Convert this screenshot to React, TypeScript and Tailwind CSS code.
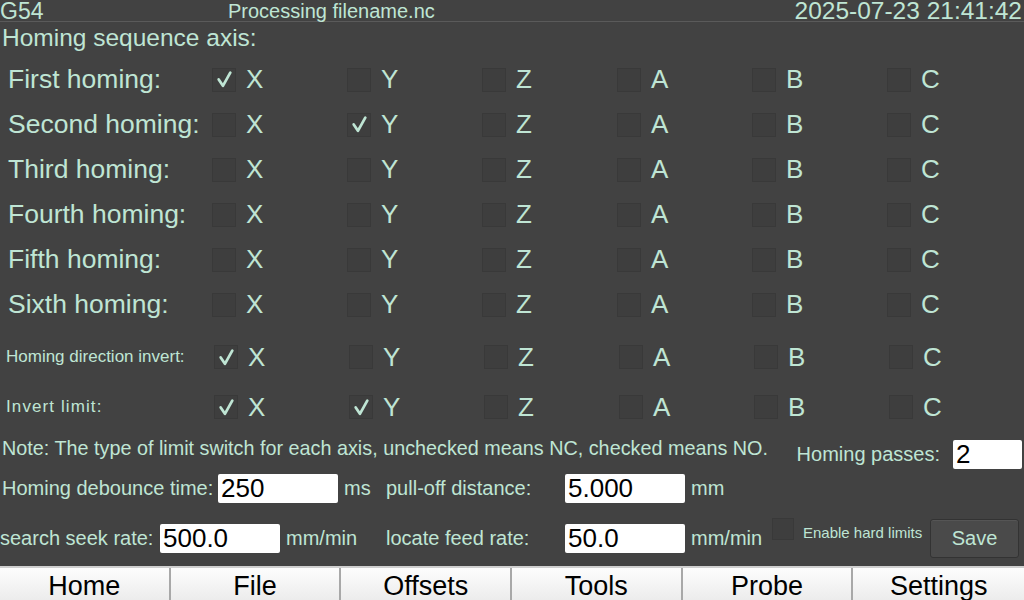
import React from "react";

const AXES = ["X", "Y", "Z", "A", "B", "C"];

function Box({ checked, size = 24 }: { checked?: boolean; size?: number }) {
  return (
    <div
      className="flex items-center justify-center border border-[#393939] bg-[#3e3e3e] shrink-0"
      style={{ width: size, height: size }}
    >
      {checked && (
        <svg width="19" height="19" viewBox="0 0 18 18" fill="none">
          <path d="M3.5 9 L7.5 15 L14.5 2.5" stroke="#bfe5d4" strokeWidth="2.6" strokeLinecap="round" strokeLinejoin="round" />
        </svg>
      )}
    </div>
  );
}

function HomingRow({ label, checked }: { label: string; checked: number }) {
  return (
    <div className="flex items-center h-[45px]">
      <div className="w-[212px] pl-[8px] text-[26.5px] whitespace-nowrap">{label}</div>
      {AXES.map((a, i) => (
        <div key={a} className="w-[135px] flex items-center gap-[10px]">
          <Box checked={i === checked} />
          <span className="text-[26px]">{a}</span>
        </div>
      ))}
    </div>
  );
}

function SmallRow({ label, checked, wide }: { label: string; checked: number[]; wide?: boolean }) {
  return (
    <div className="flex items-center h-[50px]">
      <div
        className={
          "w-[214px] pl-[6px] text-[17px] whitespace-nowrap " + (wide ? "tracking-[1.1px]" : "")
        }
      >
        {label}
      </div>
      {AXES.map((a, i) => (
        <div key={a} className="w-[135px] flex items-center gap-[10px]">
          <Box checked={checked.includes(i)} />
          <span className="text-[26px]">{a}</span>
        </div>
      ))}
    </div>
  );
}

function Input({ value, w = 120 }: { value: string; w?: number }) {
  return (
    <div
      className="h-[29px] bg-white rounded-[2px] text-black text-[26px] leading-[29px] pl-[3px] shrink-0"
      style={{ width: w }}
    >
      {value}
    </div>
  );
}

export default function App() {
  const tabs = ["Home", "File", "Offsets", "Tools", "Probe", "Settings"];
  return (
    <div
      className="w-[1024px] h-[600px] bg-[#424242] text-[#bfe5d4] overflow-hidden flex flex-col"
      style={{ fontFamily: "'Liberation Sans', Arial, sans-serif" }}
    >
      {/* header */}
      <div className="h-[22px] flex items-center border-b border-[#5a5a5a] relative shrink-0">
        <span className="text-[23px] leading-[20px] pl-[0px]">G54</span>
        <span className="absolute left-[228px] top-[1px] text-[20px] leading-[20px]">Processing filename.nc</span>
        <span className="ml-auto text-[24.5px] leading-[20px] pr-[2px] pt-[1px]">2025-07-23 21:41:42</span>
      </div>

      <div className="h-[33px] flex items-center pl-[2px] text-[24.5px] shrink-0">Homing sequence axis:</div>

      <div className="h-[2px] shrink-0" />
      <HomingRow label="First homing:" checked={0} />
      <HomingRow label="Second homing:" checked={1} />
      <HomingRow label="Third homing:" checked={-1} />
      <HomingRow label="Fourth homing:" checked={-1} />
      <HomingRow label="Fifth homing:" checked={-1} />
      <HomingRow label="Sixth homing:" checked={-1} />

      <div className="h-[5px] shrink-0" />
      <SmallRow label="Homing direction invert:" checked={[0]} />
      <SmallRow label="Invert limit:" checked={[0, 1]} wide />

      {/* note + homing passes */}
      <div className="h-[38px] flex items-start shrink-0">
        <span className="pl-[2px] pt-[2px] text-[19.8px] whitespace-nowrap">
          Note: The type of limit switch for each axis, unchecked means NC, checked means NO.
        </span>
        <div className="ml-auto flex items-center gap-[13px] pt-[7px] pr-[2px]">
          <span className="text-[20px] whitespace-nowrap">Homing passes:</span>
          <Input value="2" w={69} />
        </div>
      </div>

      {/* debounce row */}
      <div className="h-[36px] flex items-center shrink-0">
        <span className="pl-[2px] text-[20px] w-[218px] whitespace-nowrap">Homing debounce time:</span>
        <Input value="250" />
        <span className="text-[20px] ml-[6px] w-[42px]">ms</span>
        <span className="text-[20px] w-[179px] whitespace-nowrap">pull-off distance:</span>
        <Input value="5.000" />
        <span className="text-[20px] ml-[6px]">mm</span>
      </div>

      <div className="h-[12px] shrink-0" />

      {/* seek row */}
      <div className="h-[40px] flex items-center shrink-0">
        <span className="text-[20px] w-[160px] whitespace-nowrap">search seek rate:</span>
        <Input value="500.0" />
        <span className="text-[20px] ml-[6px] w-[100px] whitespace-nowrap">mm/min</span>
        <span className="text-[20px] w-[179px] whitespace-nowrap">locate feed rate:</span>
        <Input value="50.0" />
        <span className="text-[20px] ml-[6px] w-[81px] whitespace-nowrap">mm/min</span>
        <div className="self-start mt-[0px]">
          <Box size={22} />
        </div>
        <span className="self-start text-[15px] ml-[9px] mt-[4px] w-[127px] whitespace-nowrap">Enable hard limits</span>
        <button className="h-[39px] w-[89px] bg-[#4a4a4a] border border-[#333] rounded-[3px] text-[20px] text-[#bfe5d4] shadow-[inset_0_1px_0_#555]">
          Save
        </button>
      </div>

      <div className="flex-1" />

      {/* nav */}
      <div className="h-[34px] grid grid-cols-6 border-t-2 border-[#cfcfcf] bg-[#f4f4f4] shrink-0">
        {tabs.map((t, i) => (
          <div
            key={t}
            className={
              "flex items-center justify-center text-black text-[27px] leading-none pt-[5px] bg-gradient-to-b from-[#fdfdfd] to-[#ececec] " +
              (i < 5 ? "border-r-2 border-[#a8a8a8]" : "")
            }
          >
            {t}
          </div>
        ))}
      </div>
    </div>
  );
}
